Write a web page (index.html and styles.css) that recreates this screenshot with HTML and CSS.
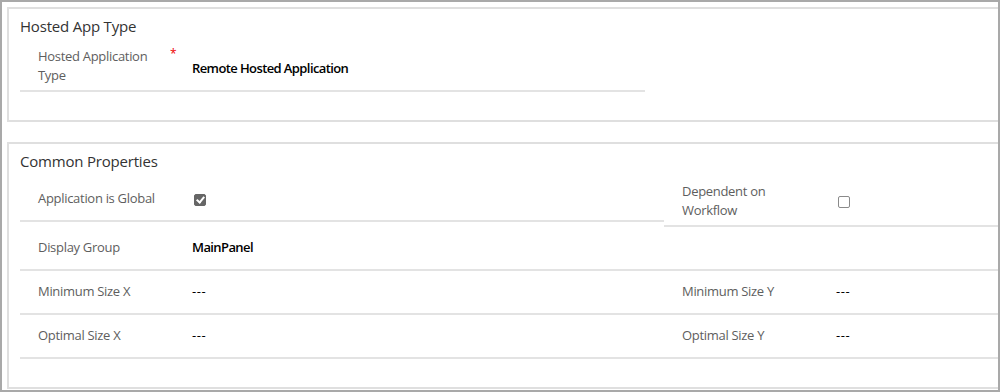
FILE: index.html
```html
<!DOCTYPE html>
<html lang="en">
<head>
    <meta charset="UTF-8">
    <title>Hosted Control</title>
    <link rel="stylesheet" href="styles.css">
</head>
<body>
    <div class="frame">
        <section class="card">
            <h2 class="card-title">Hosted App Type</h2>
            <div class="grid grid-single">
                <div class="field">
                    <div class="label">Hosted Application Type</div>
                    <span class="req">*</span>
                    <div class="value value-low">Remote Hosted Application</div>
                </div>
            </div>
        </section>

        <section class="card">
            <h2 class="card-title">Common Properties</h2>
            <div class="grid grid-double">
                <div class="field">
                    <div class="label">Application is Global</div>
                    <span class="req"></span>
                    <div class="value"><span class="check checked"></span></div>
                </div>
                <div class="field">
                    <div class="label">Dependent on Workflow</div>
                    <span class="req"></span>
                    <div class="value"><span class="check"></span></div>
                </div>

                <div class="field">
                    <div class="label">Display Group</div>
                    <span class="req"></span>
                    <div class="value">MainPanel</div>
                </div>
                <div class="field"></div>

                <div class="field">
                    <div class="label">Minimum Size X</div>
                    <span class="req"></span>
                    <div class="value empty">---</div>
                </div>
                <div class="field">
                    <div class="label">Minimum Size Y</div>
                    <span class="req"></span>
                    <div class="value empty">---</div>
                </div>

                <div class="field">
                    <div class="label">Optimal Size X</div>
                    <span class="req"></span>
                    <div class="value empty">---</div>
                </div>
                <div class="field">
                    <div class="label">Optimal Size Y</div>
                    <span class="req"></span>
                    <div class="value empty">---</div>
                </div>
            </div>
        </section>
    </div>
</body>
</html>
```

FILE: styles.css
```css
body {
    margin: 0;
    font-family: "Segoe UI", "Open Sans", sans-serif;
    background-color: #fff;
}

.frame {
    width: 1000px;
    height: 392px;
    box-sizing: border-box;
    border: 2px solid #a9a9a9;
    padding: 5px 0 0 5px;
    overflow: hidden;
}

.card {
    border: 2px solid #dfdfdf;
    border-right: none;
    padding: 7px 0 28px 11px;
    margin-bottom: 20px;
}

.card-title {
    margin: 0 0 7px 0;
    font-size: 15px;
    font-weight: normal;
    line-height: 20px;
    letter-spacing: -0.2px;
    color: #333;
}

.grid {
    display: grid;
    align-items: start;
}

.grid-single {
    grid-template-columns: 625px;
}

.grid-double {
    grid-template-columns: 644px 1fr;
}

.field {
    display: flex;
    align-items: center;
    box-sizing: border-box;
    min-height: 44px;
    padding: 4px 0 5px 18px;
    border-bottom: 2px solid #e3e3e3;
}

.label {
    width: 132px;
    font-size: 13px;
    line-height: 19px;
    letter-spacing: -0.3px;
    color: #5e5e5e;
}

.req {
    align-self: flex-start;
    width: 22px;
    font-size: 12px;
    line-height: 14px;
    color: #e00;
}

.value {
    font-size: 13px;
    font-weight: 600;
    line-height: 19px;
    letter-spacing: -0.6px;
    color: #000;
}

.value-low {
    padding-top: 4px;
}

.value.empty {
    font-weight: normal;
    letter-spacing: 0.6px;
}

.check {
    display: inline-block;
    width: 12px;
    height: 12px;
    box-sizing: border-box;
    margin-left: 2px;
    border: 1px solid #8a8a8a;
    border-radius: 2px;
    vertical-align: middle;
}

.check.checked {
    background-color: #666;
    border-color: #666;
    position: relative;
}

.check.checked::after {
    content: "";
    position: absolute;
    left: 3px;
    top: 0px;
    width: 3px;
    height: 6px;
    border: solid #fff;
    border-width: 0 2px 2px 0;
    transform: rotate(40deg);
}
```
